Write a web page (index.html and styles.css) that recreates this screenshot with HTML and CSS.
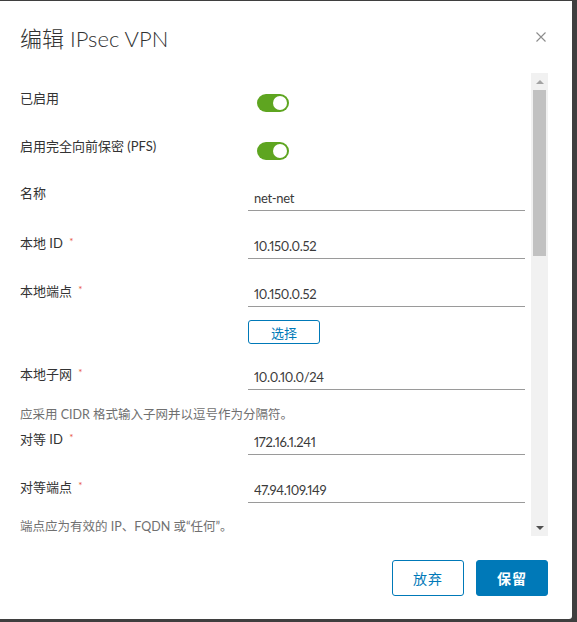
FILE: index.html
```html
<!DOCTYPE html>
<html lang="zh-CN">
<head>
<meta charset="utf-8">
<title>编辑 IPsec VPN</title>
<link rel="stylesheet" href="styles.css">
</head>
<body>
<div class="modal">
  <div class="modal-header">
    <h3 class="modal-title">编辑 IPsec VPN</h3>
    <button class="close" aria-label="关闭">
      <svg width="10" height="10" viewBox="0 0 10 10"><path d="M0.5 0.5 L9.5 9.5 M9.5 0.5 L0.5 9.5" stroke="#8c8c8c" stroke-width="1.1" fill="none"/></svg>
    </button>
  </div>
  <div class="modal-body">
    <div class="form">
      <div class="row toggle-row first">
        <label class="lbl">已启用</label>
        <span class="toggle"><span class="knob"></span></span>
      </div>
      <div class="row toggle-row second">
        <label class="lbl">启用完全向前保密 (PFS)</label>
        <span class="toggle"><span class="knob"></span></span>
      </div>
      <div class="row field-row">
        <label class="lbl">名称</label>
        <div class="ctl"><input class="inp" value="net-net"></div>
      </div>
      <div class="row field-row">
        <label class="lbl">本地 ID <span class="req">*</span></label>
        <div class="ctl"><input class="inp" value="10.150.0.52"></div>
      </div>
      <div class="row field-row with-btn">
        <label class="lbl">本地端点 <span class="req">*</span></label>
        <div class="ctl"><input class="inp" value="10.150.0.52"><button class="btn-sm">选择</button></div>
      </div>
      <div class="row field-row subnet">
        <label class="lbl">本地子网 <span class="req">*</span></label>
        <div class="ctl"><input class="inp" value="10.0.10.0/24"></div>
      </div>
      <p class="help help-1">应采用 CIDR 格式输入子网并以逗号作为分隔符。</p>
      <div class="row field-row">
        <label class="lbl">对等 ID <span class="req">*</span></label>
        <div class="ctl"><input class="inp" value="172.16.1.241"></div>
      </div>
      <div class="row field-row last">
        <label class="lbl">对等端点 <span class="req">*</span></label>
        <div class="ctl"><input class="inp" value="47.94.109.149"></div>
      </div>
      <p class="help help-2">端点应为有效的 IP、FQDN 或“任何”。</p>
    </div>
    <div class="scrollbar">
      <span class="sb-btn"><span class="tri up"></span></span>
      <span class="thumb"></span>
      <span class="sb-fill"></span>
      <span class="sb-btn"><span class="tri down"></span></span>
    </div>
  </div>
  <div class="modal-footer">
    <button class="btn btn-outline">放弃</button>
    <button class="btn btn-primary">保留</button>
  </div>
</div>
</body>
</html>
```
FILE: styles.css
```css
* { box-sizing: border-box; }
html, body { margin: 0; padding: 0; }
body {
  background: #3f3f3f;
  width: 577px;
  height: 622px;
  overflow: hidden;
  font-family: "Lato", "Noto Sans CJK SC", sans-serif;
}
.modal {
  margin-top: 1px;
  width: 572px;
  height: 618px;
  background: #fff;
  border-radius: 0 0 3px 0;
  display: flex;
  flex-direction: column;
}
.modal-header {
  height: 72px;
  flex: none;
  display: flex;
  align-items: center;
  justify-content: space-between;
  padding: 0 26px 0 20px;
}
.modal-title {
  margin: 0;
  font-size: 22px;
  font-weight: 300;
  color: #313131;
}
.close {
  border: 0;
  background: none;
  padding: 0;
  width: 10px;
  height: 10px;
  display: block;
}
.close svg { display: block; }
.modal-body {
  height: 463px;
  flex: none;
  display: flex;
  padding-right: 24px;
}
.form {
  flex: 1;
  overflow: hidden;
  padding: 16px 6px 0 20px;
}
.row {
  display: grid;
  grid-template-columns: 228px 1fr;
  align-items: start;
}
.lbl {
  font-size: 13px;
  line-height: 18px;
  color: #333;
}
.req {
  color: #e8553e;
  font-size: 10px;
  vertical-align: 3px;
  margin-left: 3px;
}
.toggle-row.first { height: 48px; }
.toggle-row.second { height: 47px; }
.toggle {
  margin-top: 5px;
  margin-left: 9px;
  width: 32px;
  height: 18px;
  border-radius: 9px;
  background: #5ea520;
  display: flex;
  align-items: center;
  justify-content: flex-end;
  padding-right: 2px;
}
.knob {
  width: 14px;
  height: 14px;
  border-radius: 50%;
  background: #fff;
}
.field-row { margin-bottom: 21px; }
.ctl { padding-top: 2px; }
.inp {
  display: block;
  width: 100%;
  height: 25px;
  border: 0;
  border-bottom: 1px solid #9a9a9a;
  padding: 0 6px;
  margin: 0;
  font-family: "Lato", "Noto Sans CJK SC", sans-serif;
  font-size: 13px;
  font-variant-numeric: proportional-nums;
  letter-spacing: -0.3px;
  color: #3a3a3a;
  background: transparent;
  outline: none;
}
.with-btn { margin-bottom: 19px; }
.btn-sm {
  display: block;
  margin-top: 13px;
  width: 72px;
  height: 24px;
  border: 1px solid #0079b8;
  border-radius: 3px;
  background: #fff;
  color: #0079b8;
  font-family: "Lato", "Noto Sans CJK SC", sans-serif;
  font-size: 13px;
  padding: 0;
}
.subnet { margin-bottom: 0; }
.help {
  margin: 0;
  font-size: 12.5px;
  line-height: 18px;
  color: #707070;
}
.help-1 { margin-top: 16px; margin-bottom: 4px; }
.last { margin-bottom: 15px; }
.scrollbar {
  width: 17px;
  flex: none;
  background: #f1f1f1;
  display: flex;
  flex-direction: column;
}
.sb-btn {
  height: 17px;
  flex: none;
  display: flex;
  align-items: center;
  justify-content: center;
}
.tri {
  width: 0;
  height: 0;
  border-left: 4px solid transparent;
  border-right: 4px solid transparent;
}
.tri.up { border-bottom: 4px solid #a3a3a3; }
.tri.down { border-top: 4px solid #505050; }
.thumb {
  height: 166px;
  margin: 0 2px;
  background: #c1c1c1;
  flex: none;
}
.sb-fill { flex: 1; }
.modal-footer {
  flex: 1;
  display: flex;
  justify-content: flex-end;
  align-items: flex-start;
  gap: 12px;
  padding: 24px 24px 0 0;
}
.btn {
  width: 72px;
  height: 36px;
  border-radius: 3px;
  font-family: "Lato", "Noto Sans CJK SC", sans-serif;
  font-size: 14px;
  font-weight: 400;
  padding: 0;
  letter-spacing: 1px;
}
.btn-outline {
  border: 1px solid #0079b8;
  background: #fff;
  color: #0079b8;
}
.btn-primary {
  border: 1px solid #0079b8;
  background: #0079b8;
  color: #fff;
  font-weight: 700;
}
```
